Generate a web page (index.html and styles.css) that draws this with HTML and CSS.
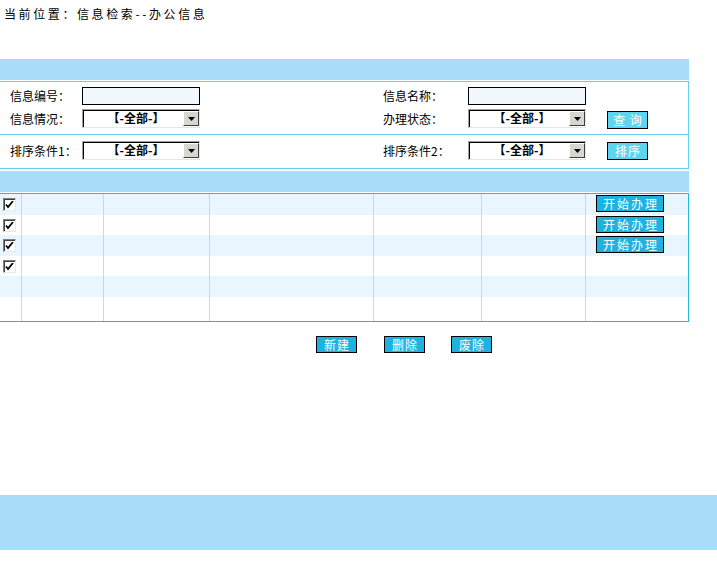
FILE: index.html
```html
<!DOCTYPE html>
<html lang="zh">
<head>
<meta charset="utf-8">
<title>信息检索</title>
<link rel="stylesheet" href="styles.css">
</head>
<body>
<div class="crumb">当前位置：信息检索--办公信息</div>

<div class="bar bar-top"></div>

<div class="panel">
  <div class="frow frow-a">
    <span class="lbl">信息编号：</span>
    <span class="ctl"><span class="inp"></span></span>
    <span class="lbl">信息名称：</span>
    <span class="ctl"><span class="inp"></span></span>
    <span></span>

    <span class="lbl">信息情况：</span>
    <span class="ctl"><span class="sel"><span class="sel-txt">【-全部-】</span><span class="sel-btn"><svg width="7" height="4" viewBox="0 0 7 4"><path d="M0 0h7L3.5 4z" fill="#000"/></svg></span></span></span>
    <span class="lbl">办理状态：</span>
    <span class="ctl"><span class="sel"><span class="sel-txt">【-全部-】</span><span class="sel-btn"><svg width="7" height="4" viewBox="0 0 7 4"><path d="M0 0h7L3.5 4z" fill="#000"/></svg></span></span></span>
    <span class="ctl"><span class="btn btn-light">查 询</span></span>
  </div>
  <div class="frow frow-b">
    <span class="lbl">排序条件1：</span>
    <span class="ctl"><span class="sel"><span class="sel-txt">【-全部-】</span><span class="sel-btn"><svg width="7" height="4" viewBox="0 0 7 4"><path d="M0 0h7L3.5 4z" fill="#000"/></svg></span></span></span>
    <span class="lbl">排序条件2：</span>
    <span class="ctl"><span class="sel"><span class="sel-txt">【-全部-】</span><span class="sel-btn"><svg width="7" height="4" viewBox="0 0 7 4"><path d="M0 0h7L3.5 4z" fill="#000"/></svg></span></span></span>
    <span class="ctl"><span class="btn btn-light">排序</span></span>
  </div>
</div>

<div class="bar bar-mid"></div>

<div class="grid">
  <div class="row r1 alt">
    <div class="c c0"><span class="chk"><svg width="9" height="8" viewBox="0 0 9 8"><path d="M1 3.5l2 2.5 5-6" stroke="#000" stroke-width="1.8" fill="none"/></svg></span></div>
    <div class="c c1"></div><div class="c c2"></div><div class="c c3"></div><div class="c c4"></div><div class="c c5"></div>
    <div class="c c6"><span class="btn btn-dark">开始办理</span></div>
  </div>
  <div class="row r2">
    <div class="c c0"><span class="chk"><svg width="9" height="8" viewBox="0 0 9 8"><path d="M1 3.5l2 2.5 5-6" stroke="#000" stroke-width="1.8" fill="none"/></svg></span></div>
    <div class="c c1"></div><div class="c c2"></div><div class="c c3"></div><div class="c c4"></div><div class="c c5"></div>
    <div class="c c6"><span class="btn btn-dark">开始办理</span></div>
  </div>
  <div class="row r3 alt">
    <div class="c c0"><span class="chk"><svg width="9" height="8" viewBox="0 0 9 8"><path d="M1 3.5l2 2.5 5-6" stroke="#000" stroke-width="1.8" fill="none"/></svg></span></div>
    <div class="c c1"></div><div class="c c2"></div><div class="c c3"></div><div class="c c4"></div><div class="c c5"></div>
    <div class="c c6"><span class="btn btn-dark">开始办理</span></div>
  </div>
  <div class="row r4">
    <div class="c c0"><span class="chk"><svg width="9" height="8" viewBox="0 0 9 8"><path d="M1 3.5l2 2.5 5-6" stroke="#000" stroke-width="1.8" fill="none"/></svg></span></div>
    <div class="c c1"></div><div class="c c2"></div><div class="c c3"></div><div class="c c4"></div><div class="c c5"></div>
    <div class="c c6"></div>
  </div>
  <div class="row r5 alt">
    <div class="c c0"></div>
    <div class="c c1"></div><div class="c c2"></div><div class="c c3"></div><div class="c c4"></div><div class="c c5"></div>
    <div class="c c6"></div>
  </div>
  <div class="row r6">
    <div class="c c0"></div>
    <div class="c c1"></div><div class="c c2"></div><div class="c c3"></div><div class="c c4"></div><div class="c c5"></div>
    <div class="c c6"></div>
  </div>
</div>

<div class="actions">
  <span class="btn btn-dark btn-act">新建</span>
  <span class="btn btn-dark btn-act">删除</span>
  <span class="btn btn-dark btn-act">废除</span>
</div>

<div class="footer"></div>
</body>
</html>
```

FILE: styles.css
```css
* { box-sizing: border-box; }
html, body { margin: 0; padding: 0; background: #fff; }
body {
  width: 717px;
  font-family: "Noto Sans CJK SC", "Noto Sans", sans-serif;
  font-size: 12px;
  color: #000;
  line-height: 1;
}

.crumb {
  height: 59px;
  padding: 8px 0 0 4px;
  letter-spacing: 2.6px;
  line-height: 12px;
}

.bar {
  width: 689px;
  height: 21px;
  background: #a8ddfa;
}
.bar-top { margin-bottom: 1px; }
.bar-mid { margin-top: 2px; margin-bottom: 1px; }

.panel {
  width: 689px;
  border: 1px solid #62d2f2;
  border-left: none;
}

.frow {
  display: grid;
  grid-template-columns: 72px 301px 85px 139px 1fr;
  padding-left: 10px;
  align-items: center;
}
.frow-a {
  height: 53px;
  border-bottom: 1px solid #62d2f2;
  grid-template-rows: 18px 19px;
  row-gap: 4px;
  padding-top: 5px;
  align-content: start;
}
.frow-b {
  height: 33px;
  padding-top: 6px;
  align-content: start;
}

.lbl { white-space: nowrap; line-height: 12px; }
.ctl { display: flex; align-items: center; }

.inp {
  display: block;
  width: 118px;
  height: 18px;
  border: 1px solid #000;
  background: #f1f9ff;
}

.sel {
  display: flex;
  width: 118px;
  height: 19px;
  border-top: 1px solid #a0a0a0;
  border-left: 1px solid #a0a0a0;
  border-right: 1px solid #e6e6e6;
  border-bottom: 1px solid #e6e6e6;
  background: #fff;
  box-shadow: inset 1px 1px 0 #000;
}
.sel-txt {
  flex: 1;
  text-align: center;
  font-weight: bold;
  line-height: 15px;
  padding-left: 6px;
  font-size: 12px;
}
.sel-btn {
  width: 16px;
  margin: 1px 0 1px 0;
  background: #d8d6d0;
  border-top: 1px solid #fff;
  border-left: 1px solid #fff;
  border-right: 1px solid #404040;
  border-bottom: 1px solid #404040;
  display: flex;
  align-items: center;
  justify-content: center;
}

.btn {
  display: inline-flex;
  align-items: center;
  justify-content: center;
  border: 1px solid #000;
  color: #fff;
  font-size: 12px;
  line-height: 12px;
  white-space: nowrap;
}
.btn-light {
  width: 41px;
  height: 18px;
  background: #5dd5f2;
  letter-spacing: 1px;
  padding-left: 1px;
}
.frow-a .btn-light { margin-top: 3px; }
.btn-dark {
  width: 68px;
  height: 17px;
  background: #1fb2e0;
  letter-spacing: 2px;
  padding-left: 2px;
}

.grid {
  width: 689px;
  border-top: 1px solid #22b8e2;
  border-right: 1px solid #22b8e2;
  border-bottom: 1px solid #22b8e2;
}
.row {
  display: grid;
  grid-template-columns: 22px 82px 106px 164px 108px 104px 1fr;
  height: 20px;
  background: #fff;
}
.row.alt { background: #e9f6ff; }
.r1, .r3, .r5 { height: 21px; }
.r6 { height: 24px; }
.c { border-right: 1px solid #b3dff0; }
.c6 { border-right: none; padding-left: 10px; padding-top: 1px; }
.c0 { padding-left: 3px; padding-top: 4px; }

.chk {
  display: flex;
  align-items: center;
  justify-content: center;
  width: 13px;
  height: 13px;
  border-top: 1px solid #808080;
  border-left: 1px solid #808080;
  border-right: 1px solid #e8e8e8;
  border-bottom: 1px solid #e8e8e8;
  background: #fff;
  box-shadow: inset 1px 1px 0 #404040;
}

.actions {
  display: flex;
  padding-left: 316px;
  gap: 27px;
  margin-top: 14px;
}
.btn-act {
  width: 41px;
  height: 17px;
  letter-spacing: 1px;
  padding-left: 1px;
}
.actions .btn-act + .btn-act + .btn-act { margin-left: -1px; }

.footer {
  width: 717px;
  height: 55px;
  margin-top: 142px;
  background: #a8ddfa;
}
```
